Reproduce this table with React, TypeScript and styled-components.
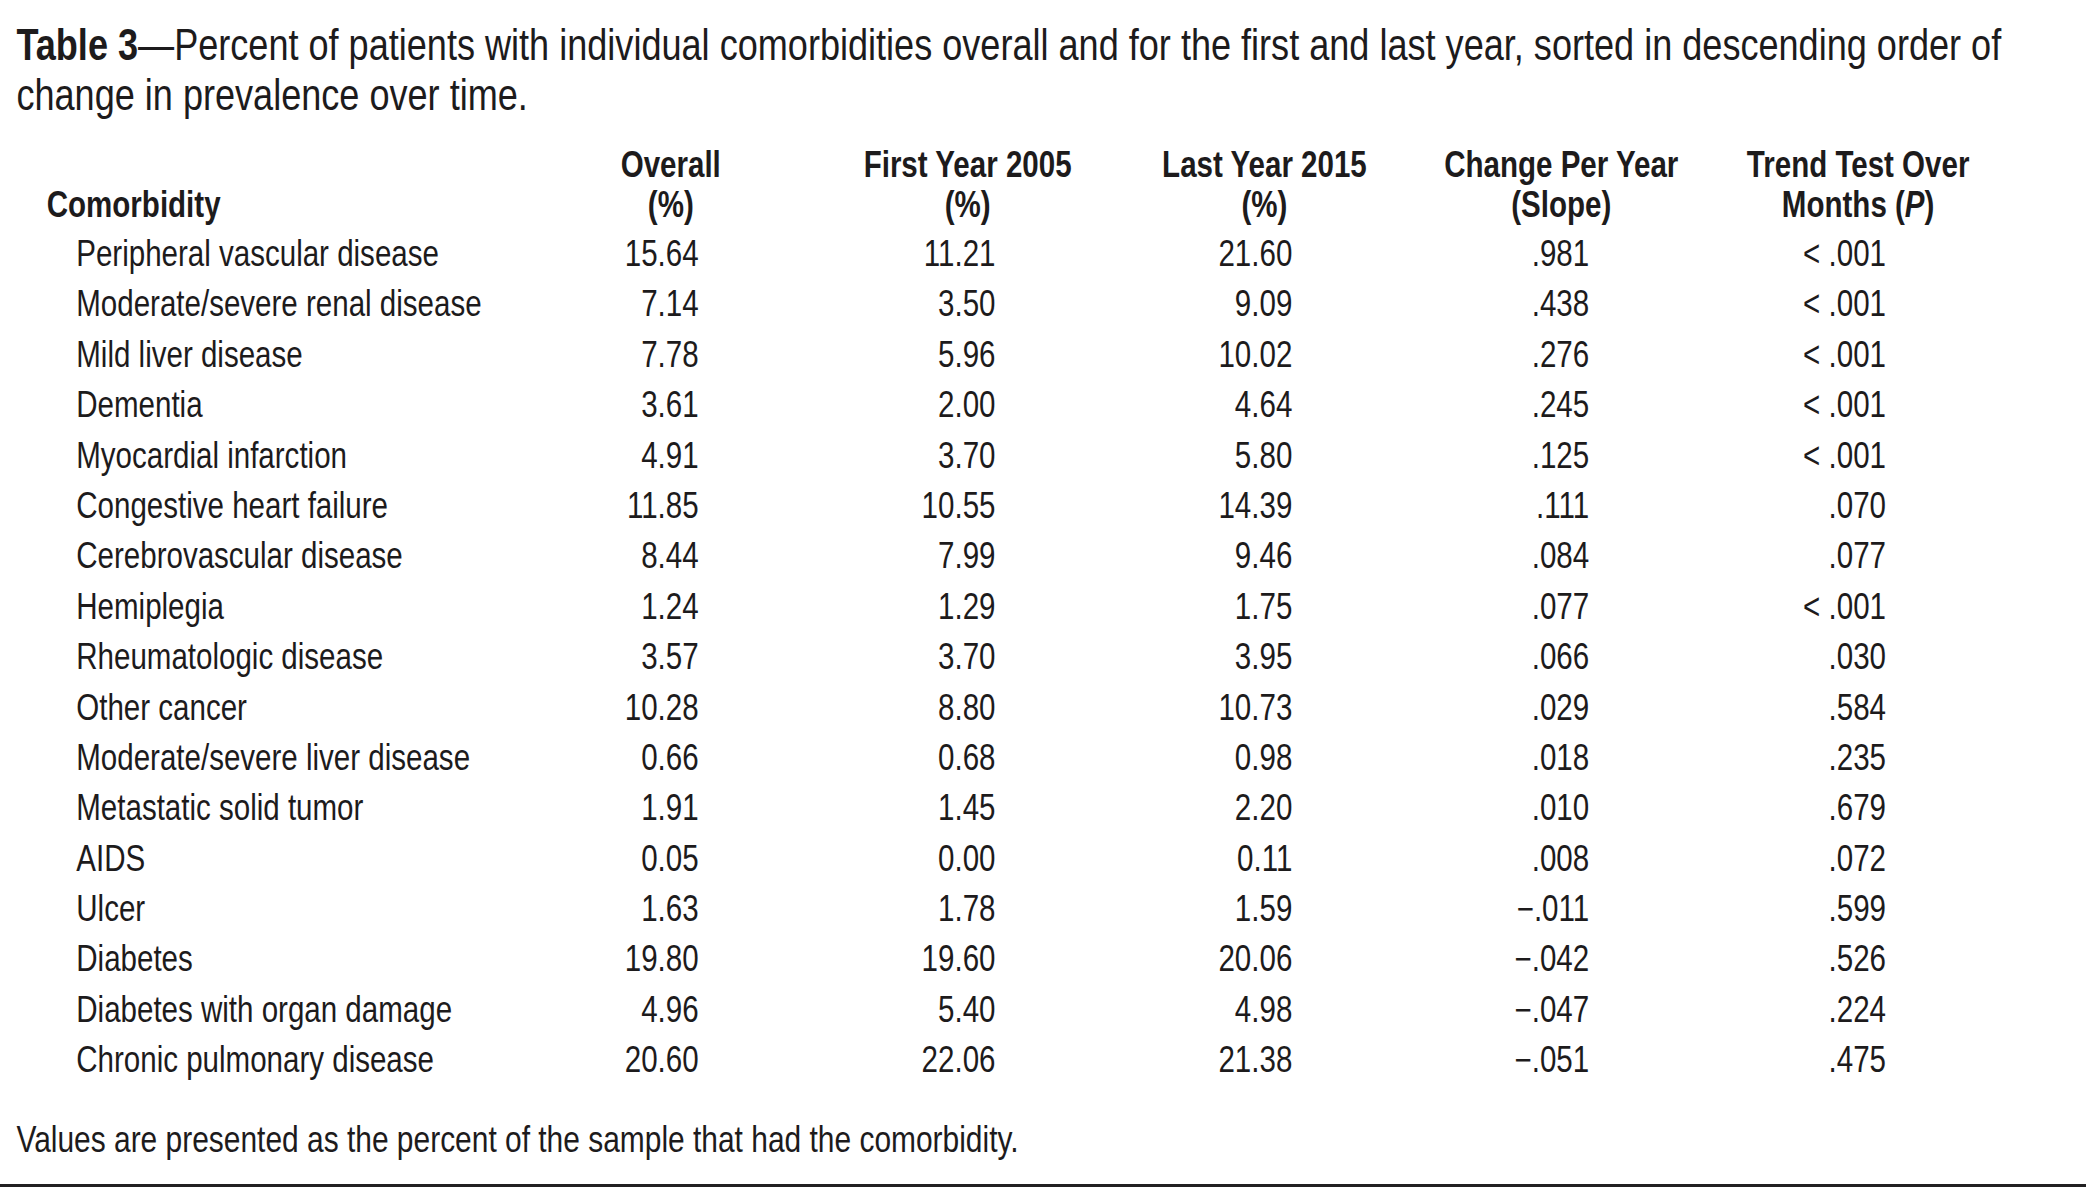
import styled, { createGlobalStyle } from 'styled-components'

// no narrow face installed: the sheet is laid out wide and squeezed to Arial Narrow proportions
const NARROW = 0.82

const GlobalStyle = createGlobalStyle`
  html, body {
    margin: 0;
    padding: 0;
    background: #ffffff;
  }
  body {
    font-family: "Liberation Sans", Arial, sans-serif;
    color: #1d1b1c;
    overflow: hidden;
  }
`

const Page = styled.div`
  width: 2086px;
  height: 1189px;
  overflow: hidden;
`

const Sheet = styled.div`
  width: ${2086 / NARROW}px;
  height: 1189px;
  box-sizing: border-box;
  padding-top: 20px;
  display: flex;
  flex-direction: column;
  transform: scaleX(${NARROW});
  transform-origin: left top;
`

const Caption = styled.p`
  margin: 0;
  padding-left: 20px;
  font-size: 44px;
  line-height: 50px;
  white-space: nowrap;
  b {
    font-weight: bold;
  }
`

const Table = styled.div`
  margin-top: 25px;
  display: flex;
  flex-direction: column;
`

const Grid = styled.div`
  display: grid;
  grid-template-columns: 637px repeat(5, 362px);
`

const HeadRow = styled(Grid)`
  font-weight: bold;
  font-size: 36px;
  line-height: 40px;
  margin-bottom: 4px;
`

const HeadLabel = styled.div`
  padding-left: 57px;
  align-self: end;
`

const HeadCell = styled.div`
  text-align: center;
  i {
    font-style: italic;
  }
`

const Row = styled(Grid)`
  font-size: 36px;
  line-height: 50.4px;
  height: 50.4px;
`

const Label = styled.div`
  padding-left: 93px;
  white-space: nowrap;
`

const Num = styled.div`
  text-align: right;
  padding-right: 147px;
  white-space: nowrap;
`

const Note = styled.p`
  margin: 34px 0 0;
  padding-left: 20px;
  font-size: 36.5px;
  line-height: 40px;
  white-space: nowrap;
`

const Rule = styled.div`
  margin-top: auto;
  margin-bottom: 2px;
  height: 3px;
  background: #222022;
`

const ROWS: [string, string, string, string, string, string][] = [
  ['Peripheral vascular disease', '15.64', '11.21', '21.60', '.981', '< .001'],
  ['Moderate/severe renal disease', '7.14', '3.50', '9.09', '.438', '< .001'],
  ['Mild liver disease', '7.78', '5.96', '10.02', '.276', '< .001'],
  ['Dementia', '3.61', '2.00', '4.64', '.245', '< .001'],
  ['Myocardial infarction', '4.91', '3.70', '5.80', '.125', '< .001'],
  ['Congestive heart failure', '11.85', '10.55', '14.39', '.111', '.070'],
  ['Cerebrovascular disease', '8.44', '7.99', '9.46', '.084', '.077'],
  ['Hemiplegia', '1.24', '1.29', '1.75', '.077', '< .001'],
  ['Rheumatologic disease', '3.57', '3.70', '3.95', '.066', '.030'],
  ['Other cancer', '10.28', '8.80', '10.73', '.029', '.584'],
  ['Moderate/severe liver disease', '0.66', '0.68', '0.98', '.018', '.235'],
  ['Metastatic solid tumor', '1.91', '1.45', '2.20', '.010', '.679'],
  ['AIDS', '0.05', '0.00', '0.11', '.008', '.072'],
  ['Ulcer', '1.63', '1.78', '1.59', '\u2212.011', '.599'],
  ['Diabetes', '19.80', '19.60', '20.06', '\u2212.042', '.526'],
  ['Diabetes with organ damage', '4.96', '5.40', '4.98', '\u2212.047', '.224'],
  ['Chronic pulmonary disease', '20.60', '22.06', '21.38', '\u2212.051', '.475'],
]

export default function App() {
  return (
    <>
      <GlobalStyle />
      <Page>
        <Sheet>
          <Caption>
            <b>Table 3</b>—Percent of patients with individual comorbidities overall and for the first and last year, sorted in descending order of
            <br />
            change in prevalence over time.
          </Caption>

          <Table>
            <HeadRow>
              <HeadLabel>Comorbidity</HeadLabel>
              <HeadCell>Overall<br />(%)</HeadCell>
              <HeadCell>First Year 2005<br />(%)</HeadCell>
              <HeadCell>Last Year 2015<br />(%)</HeadCell>
              <HeadCell>Change Per Year<br />(Slope)</HeadCell>
              <HeadCell>Trend Test Over<br />Months (<i>P</i>)</HeadCell>
            </HeadRow>
            {ROWS.map(([name, ...vals]) => (
              <Row key={name}>
                <Label>{name}</Label>
                {vals.map((v, i) => (
                  <Num key={i}>{v}</Num>
                ))}
              </Row>
            ))}
          </Table>

          <Note>Values are presented as the percent of the sample that had the comorbidity.</Note>
          <Rule />
        </Sheet>
      </Page>
    </>
  )
}
